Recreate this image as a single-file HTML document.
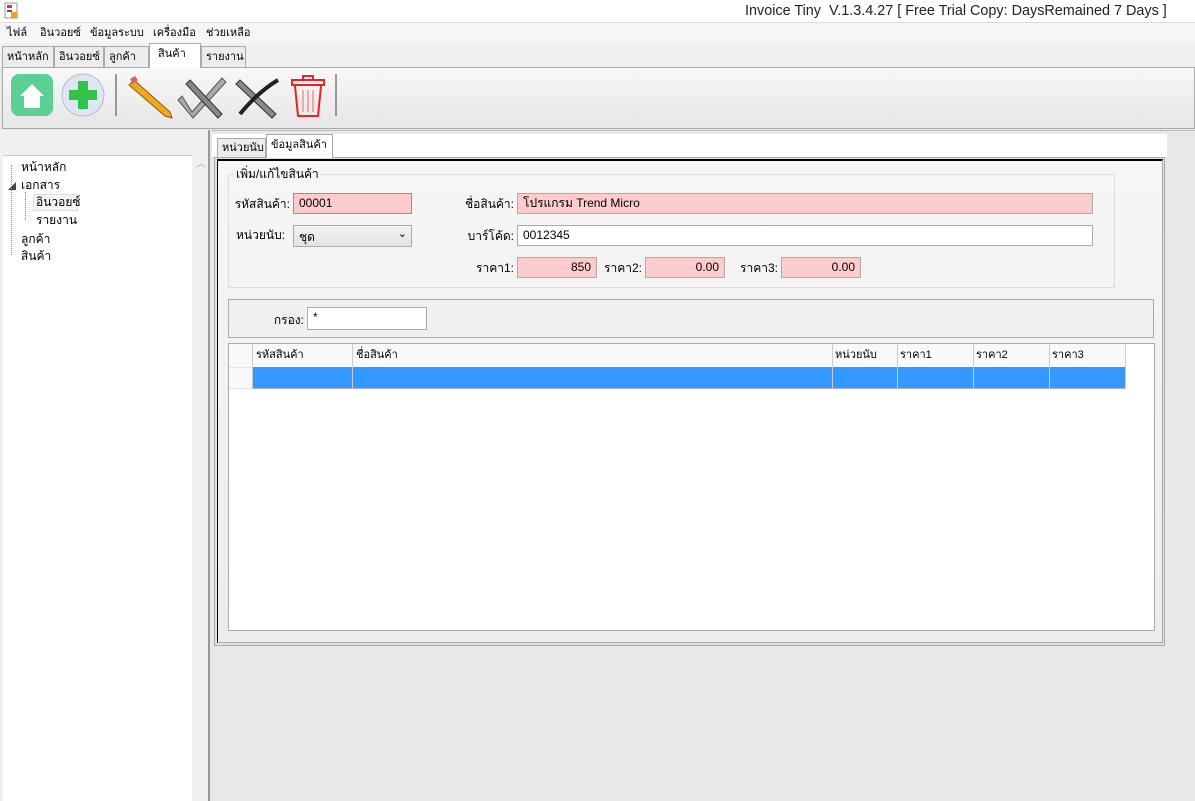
<!DOCTYPE html>
<html><head><meta charset="utf-8"><style>
*{box-sizing:border-box;margin:0;padding:0}
body{width:1195px;height:801px;overflow:hidden;position:relative;background:#e8e8e8;font-family:"Liberation Sans","Noto Sans CJK SC",sans-serif;font-size:12px;color:#000}
.a{position:absolute}
.lbl{position:absolute;white-space:nowrap;line-height:14px}
.r{position:absolute;white-space:nowrap;text-align:right;width:120px;line-height:14px}
.in{position:absolute;border:1px solid #aaa;background:#fff;padding:2px 5px;font-size:12px;line-height:14px;white-space:nowrap}
.pk{background:#ffcccc}
.tab{position:absolute;border:1px solid #aaa;border-bottom:none;background:#ececec;padding:3px 4px;white-space:nowrap;font-size:11px;line-height:14px;overflow:hidden}
</style></head><body>
<div class="a" style="left:0;top:0;width:1195px;height:22px;background:#fff"></div>
<svg class="a" style="left:4px;top:2px" width="14" height="17"><rect x="1" y="1" width="12" height="15" fill="#fff" stroke="#999"/><rect x="3" y="3" width="5" height="3" fill="#d33"/><rect x="3" y="8" width="5" height="2" fill="#555"/><rect x="7" y="10" width="6" height="6" fill="#e9a21a"/></svg>
<div class="lbl" style="left:745px;top:3px;font-size:14.4px;line-height:17px;color:#222">Invoice Tiny&nbsp;&nbsp;V.1.3.4.27 [ Free Trial Copy: DaysRemained 7 Days ]</div>
<div class="a" style="left:0;top:22px;width:1195px;height:21px;background:#f5f6f7;border-top:1px solid #ddd"></div>
<div class="lbl" style="left:7px;top:26px;font-size:11px">ไฟล์</div>
<div class="lbl" style="left:40px;top:26px;font-size:11px">อินวอยซ์</div>
<div class="lbl" style="left:90px;top:26px;font-size:11px">ข้อมูลระบบ</div>
<div class="lbl" style="left:153px;top:26px;font-size:11px">เครื่องมือ</div>
<div class="lbl" style="left:206px;top:26px;font-size:11px">ช่วยเหลือ</div>
<div class="a" style="left:0;top:43px;width:1195px;height:24px;background:#f0f0f0"></div>
<div class="tab" style="left:2px;top:46px;width:52px;height:21px">หน้าหลัก</div>
<div class="tab" style="left:54px;top:46px;width:50px;height:21px">อินวอยซ์</div>
<div class="tab" style="left:104px;top:46px;width:45px;height:21px">ลูกค้า</div>
<div class="tab" style="left:149px;top:43px;width:52px;height:25px;background:#fff;z-index:2;padding-left:8px">สินค้า</div>
<div class="tab" style="left:201px;top:46px;width:45px;height:21px">รายงาน</div>
<div class="a" style="left:2px;top:67px;width:1193px;height:62px;border:1px solid #aaa;background:linear-gradient(#f8f8f8,#e6e6e6)"></div>
<svg class="a" style="left:0;top:66px" width="345" height="60">
<rect x="11" y="8" width="42" height="42" rx="8" fill="#5ccf93"/>
<path d="M20 30 L32 18 L44 30 L40 30 L40 42 L24 42 L24 30Z" fill="#fff"/>
<circle cx="83" cy="29" r="21" fill="#dfe6f2" stroke="#b0bccc"/>
<path d="M78 15h10v9h9v10h-9v9h-10v-9h-9v-10h9z" fill="#33c24a"/>
<rect x="115" y="8" width="2" height="42" fill="#999"/>
<path d="M134 14 L170 46 L172 52 L165 50 L129 19Z" fill="#f0a820" stroke="#8a5a10"/>
<path d="M130 13 l5 -3 l3 4 l-5 4z" fill="#e06060"/>
<path d="M182 30 L192 46 L222 12 L226 16 L193 52 L178 34Z" fill="#aaa" stroke="#555"/>
<path d="M190 14 L222 48 L218 52 L186 18Z" fill="#888" stroke="#333"/>
<path d="M240 14 L276 48 L272 52 L236 18Z" fill="#888" stroke="#333"/>
<path d="M240 48 Q258 26 278 14" stroke="#222" stroke-width="4" fill="none"/>
<rect x="292" y="14" width="32" height="5" fill="none" stroke="#e22" stroke-width="2"/>
<rect x="303" y="10" width="10" height="4" fill="none" stroke="#e22" stroke-width="2"/>
<path d="M295 20 L298 50 L318 50 L321 20" fill="none" stroke="#e22" stroke-width="2"/>
<path d="M303 24v22M308 24v22M313 24v22" stroke="#e66"/>
<rect x="335" y="8" width="2" height="42" fill="#999"/>
</svg>
<div class="a" style="left:0;top:130px;width:210px;height:671px;background:#f0f0f0"></div>
<div class="a" style="left:3px;top:155px;width:189px;height:646px;background:#fff;border-top:1px solid #ccc"></div>
<div class="a" style="left:192px;top:155px;width:16px;height:646px;background:#f0f0f0"></div>
<div class="lbl" style="left:196px;top:158px;color:#aaa;font-size:10px">︿</div>
<div class="a" style="left:208px;top:130px;width:2px;height:671px;background:#999"></div>
<div class="lbl" style="left:21px;top:160px">หน้าหลัก</div>
<div class="lbl" style="left:8px;top:180px;font-size:8px;color:#444">◢</div><div class="lbl" style="left:21px;top:178px">เอกสาร</div>
<div class="a" style="left:33px;top:194px;border:1px solid #ddd;width:45px;height:17px;background:#f5f5f5"></div>
<div class="lbl" style="left:36px;top:195px">อินวอยซ์</div>
<div class="lbl" style="left:36px;top:213px">รายงาน</div>
<div class="a" style="left:25px;top:192px;border-left:1px dotted #888;height:28px"></div>
<div class="lbl" style="left:21px;top:232px">ลูกค้า</div>
<div class="lbl" style="left:21px;top:249px">สินค้า</div>
<div class="a" style="left:11px;top:165px;border-left:1px dotted #888;height:90px"></div>
<div class="a" style="left:212px;top:130px;width:983px;height:671px;background:#e8e8e8;border-top:1px solid #bbb"></div>
<div class="a" style="left:212px;top:134px;width:955px;height:23px;background:#fff"></div>
<div class="tab" style="left:217px;top:138px;width:49px;height:19px;padding:2px 4px">หน่วยนับ</div>
<div class="tab" style="left:266px;top:134px;width:67px;height:24px;background:#fff;z-index:2">ข้อมูลสินค้า</div>
<div class="a" style="left:214px;top:157px;width:951px;height:489px;border:1px solid #aaa;background:#e0e0e0"></div>
<div class="a" style="left:217px;top:159px;width:946px;height:484px;border:1px solid #aaa;border-top:2px solid #000;border-left:1px solid #000;background:linear-gradient(#f6f6f6,#ececec)"></div>
<div class="a" style="left:228px;top:174px;width:887px;height:114px;border:1px solid #ddd"></div>
<div class="lbl" style="left:234px;top:167px;background:#f5f5f5;padding:0 2px">เพิ่ม/แก้ไขสินค้า</div>
<div class="r" style="left:170px;top:197px">รหัสสินค้า:</div>
<div class="in pk" style="left:293px;top:193px;width:119px;height:21px;border-color:#5aa0e0">00001</div>
<div class="r" style="left:394px;top:197px">ชื่อสินค้า:</div>
<div class="in pk" style="left:517px;top:193px;width:576px;height:21px">โปรแกรม Trend Micro</div>
<div class="lbl" style="left:236px;top:228px">หน่วยนับ:</div>
<div class="in" style="left:293px;top:225px;width:119px;height:22px;background:linear-gradient(#f2f2f2,#e4e4e4);padding-top:4px">ชุด<span style="position:absolute;right:4px;top:1px;font-size:11px">⌄</span></div>
<div class="r" style="left:394px;top:229px">บาร์โค้ด:</div>
<div class="in" style="left:517px;top:225px;width:576px;height:21px">0012345</div>
<div class="r" style="left:394px;top:261px">ราคา1:</div>
<div class="in pk" style="left:517px;top:257px;width:80px;height:21px;text-align:right">850</div>
<div class="r" style="left:522px;top:261px">ราคา2:</div>
<div class="in pk" style="left:645px;top:257px;width:80px;height:21px;text-align:right">0.00</div>
<div class="r" style="left:658px;top:261px">ราคา3:</div>
<div class="in pk" style="left:781px;top:257px;width:80px;height:21px;text-align:right">0.00</div>
<div class="a" style="left:228px;top:299px;width:926px;height:39px;border:1px solid #aaa;background:#f0f0f0"></div>
<div class="r" style="left:184px;top:313px">กรอง:</div>
<div class="in" style="left:307px;top:307px;width:120px;height:23px">*</div>
<div class="a" style="left:228px;top:343px;width:927px;height:288px;border:1px solid #aaa;background:#fff"></div>
<div class="a" style="left:229px;top:344px;width:897px;height:23px;background:#f8f9fa"></div>
<div class="a" style="left:253px;top:367px;width:873px;height:22px;background:#3399ff;border-bottom:1px solid #aac"></div>
<div class="a" style="left:229px;top:367px;width:24px;height:22px;background:#f8f9fa;border-top:1px solid #e4e4e4;border-bottom:1px solid #e4e4e4"></div>
<div class="a" style="left:252px;top:344px;width:1px;height:45px;background:#ccc"></div>
<div class="a" style="left:352px;top:344px;width:1px;height:45px;background:#ccc"></div>
<div class="a" style="left:832px;top:344px;width:1px;height:45px;background:#ccc"></div>
<div class="a" style="left:897px;top:344px;width:1px;height:45px;background:#ccc"></div>
<div class="a" style="left:973px;top:344px;width:1px;height:45px;background:#ccc"></div>
<div class="a" style="left:1049px;top:344px;width:1px;height:45px;background:#ccc"></div>
<div class="a" style="left:1125px;top:344px;width:1px;height:45px;background:#ccc"></div>
<div class="lbl" style="left:256px;top:348px;font-size:11px">รหัสสินค้า</div>
<div class="lbl" style="left:356px;top:348px;font-size:11px">ชื่อสินค้า</div>
<div class="lbl" style="left:835px;top:348px;font-size:11px">หน่วยนับ</div>
<div class="lbl" style="left:900px;top:348px;font-size:11px">ราคา1</div>
<div class="lbl" style="left:976px;top:348px;font-size:11px">ราคา2</div>
<div class="lbl" style="left:1052px;top:348px;font-size:11px">ราคา3</div>
</body></html>
